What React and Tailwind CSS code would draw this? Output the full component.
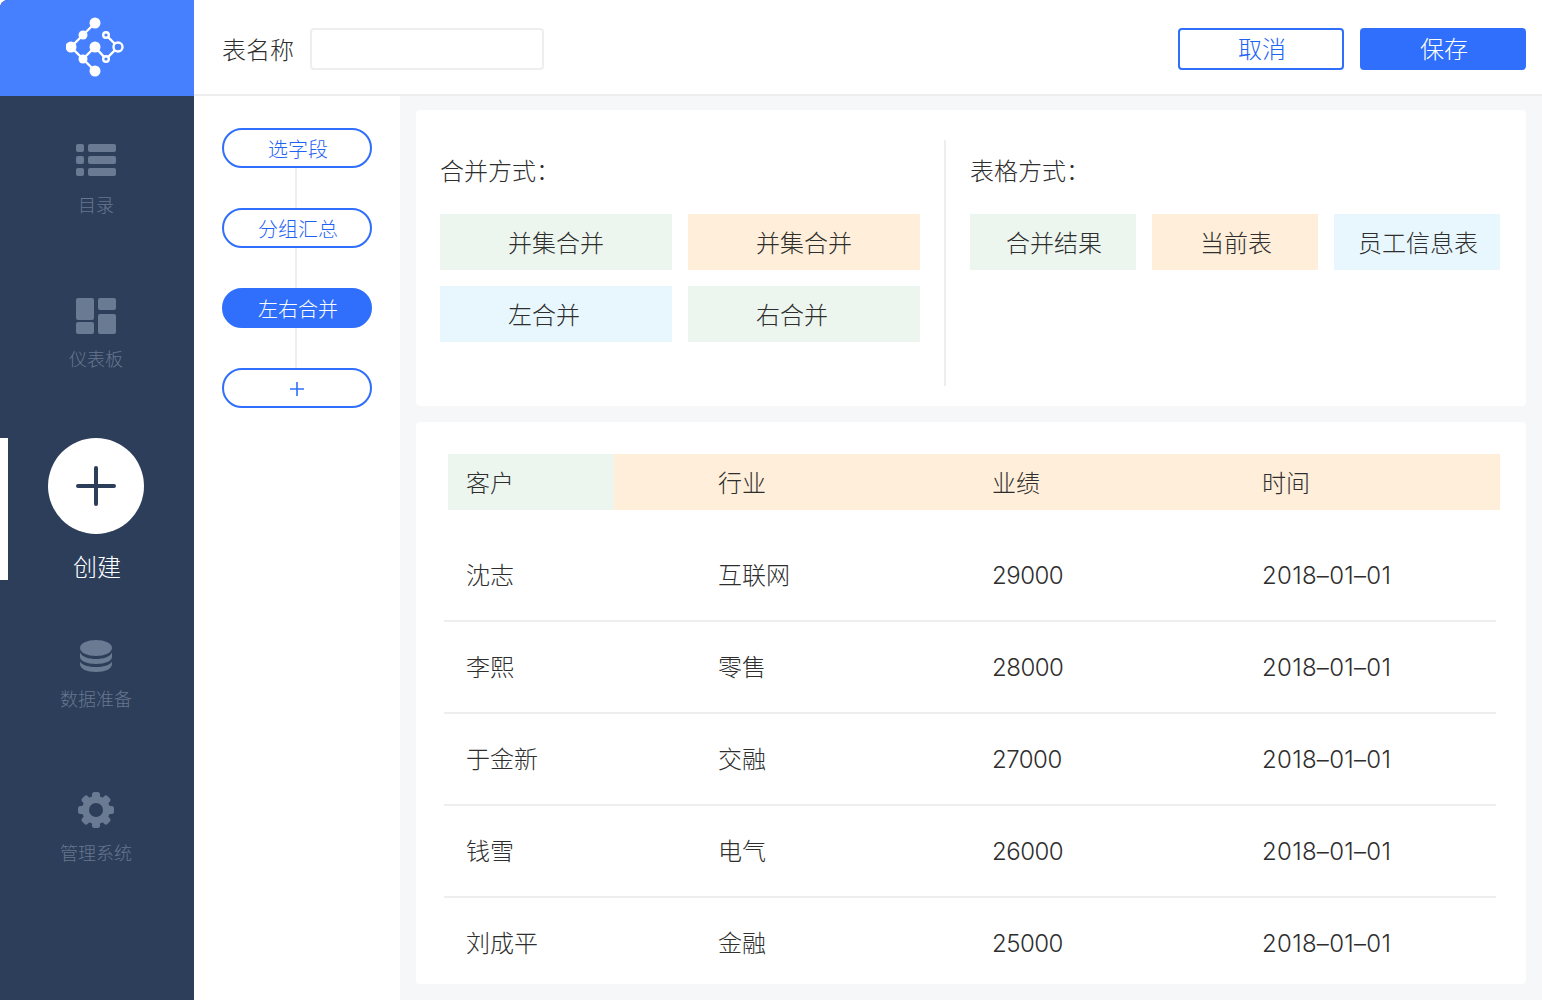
const fontStack = { fontFamily: '"Noto Sans CJK SC", "Noto Sans", sans-serif' };
const numStack = { fontFamily: 'Inter, "Noto Sans", sans-serif' };

const rows = [
  ['沈志', '互联网', '29000'],
  ['李熙', '零售', '28000'],
  ['于金新', '交融', '27000'],
  ['钱雪', '电气', '26000'],
  ['刘成平', '金融', '25000'],
];

function Logo() {
  return (
    <svg width="60" height="60" viewBox="66 17 60 60" fill="none">
      <g stroke="#fff" strokeWidth="2.4">
        <path d="M95 23L71 47L95 71" />
        <path d="M83 59L95 47L106 59L118 47L106 35" />
      </g>
      <g fill="#fff">
        <circle cx="95" cy="23" r="5.5" />
        <circle cx="83" cy="35" r="4.5" />
        <circle cx="71" cy="47" r="5.5" />
        <circle cx="95" cy="47" r="5.5" />
        <circle cx="83" cy="59" r="4.5" />
        <circle cx="95" cy="71" r="5.5" />
      </g>
      <g fill="#4680ff" stroke="#fff" strokeWidth="2.4">
        <circle cx="106" cy="35" r="2.8" />
        <circle cx="118" cy="47" r="4.5" />
        <circle cx="106" cy="59" r="2.8" />
      </g>
    </svg>
  );
}

function ListIcon() {
  return (
    <svg width="40" height="32" viewBox="0 0 40 32" fill="#6b7a93">
      <rect x="0" y="0" width="8" height="8" rx="2" />
      <rect x="12" y="0" width="28" height="8" rx="2" />
      <rect x="0" y="12" width="8" height="8" rx="2" />
      <rect x="12" y="12" width="28" height="8" rx="2" />
      <rect x="0" y="24" width="8" height="8" rx="2" />
      <rect x="12" y="24" width="28" height="8" rx="2" />
    </svg>
  );
}

function DashIcon() {
  return (
    <svg width="40" height="36" viewBox="0 0 40 36" fill="#6b7a93">
      <rect x="0" y="0" width="18" height="22" rx="2" />
      <rect x="22" y="0" width="18" height="12" rx="2" />
      <rect x="0" y="24" width="18" height="12" rx="2" />
      <rect x="22" y="16" width="18" height="20" rx="2" />
    </svg>
  );
}

function DbIcon() {
  return (
    <svg width="32" height="32" viewBox="0 0 32 32" fill="#6b7a93">
      <ellipse cx="16" cy="8" rx="16" ry="8" />
      <path d="M0 12.5C2 17 9 19 16 19S30 17 32 12.5V17C32 21 25 24 16 24S0 21 0 17Z" />
      <path d="M0 21.5C2 25.5 9 27 16 27S30 25.500 32 21.500V24C32 29 25 32 16 32S0 29 0 24Z" />
    </svg>
  );
}

function GearIcon() {
  return (
    <svg width="36" height="36" viewBox="0 0 36 36">
      <g fill="#6b7a93">
        <circle cx="18" cy="18" r="14" />
        {[0, 45, 90, 135, 180, 225, 270, 315].map((a) => (
          <rect key={a} x="14" y="0" width="8" height="8" rx="2.5" transform={`rotate(${a} 18 18)`} />
        ))}
      </g>
      <circle cx="18" cy="18" r="7" fill="#2c3e5a" />
    </svg>
  );
}

function NavItem({ icon, label, className }) {
  return (
    <div className={`flex flex-col items-center pr-0.5 ${className}`}>
      {icon}
      <span className="text-[18px] leading-[26px] text-[#67768f]">{label}</span>
    </div>
  );
}

function Pill({ children, active }) {
  return (
    <div
      className={`flex h-10 w-[150px] items-center justify-center rounded-full border-2 border-[#2f6ffb] pl-0.5 pt-0.5 text-[20px] leading-none ${
        active ? 'bg-[#2f6ffb] text-white' : 'bg-white text-[#1f63f5]'
      }`}
    >
      {children}
    </div>
  );
}

function Connector() {
  return <div className="ml-[73px] h-10 w-0.5 bg-[#eeeeee]" />;
}

function Chip({ color, className, children }) {
  return <div className={`flex h-14 items-center text-[24px] ${color} ${className}`}>{children}</div>;
}

export default function App() {
  return (
    <div style={fontStack} className="flex h-[1000px] w-[1542px] overflow-hidden rounded-t-lg bg-white font-light text-[#2e2e2e]">
      {/* sidebar */}
      <aside className="flex w-[194px] shrink-0 flex-col bg-[#2c3e5a]">
        <div className="flex h-24 items-center justify-center bg-[#4680ff] pb-0.5 pr-0.5">
          <Logo />
        </div>
        <NavItem className="mt-12 gap-[15px]" icon={<ListIcon />} label="目录" />
        <NavItem className="mt-[81px] gap-[11px]" icon={<DashIcon />} label="仪表板" />
        <div className="relative mt-[67px] flex h-[142px] flex-col items-center pr-0.5">
          <div className="absolute left-0 top-0 h-full w-2 bg-white" />
          <div className="flex size-24 shrink-0 items-center justify-center rounded-full bg-white">
            <svg width="40" height="40" viewBox="0 0 40 40" stroke="#2c3e5a" strokeWidth="4" strokeLinecap="round">
              <path d="M20 2V38M2 20H38" />
            </svg>
          </div>
          <span className="mt-[14px] pl-0.5 text-[24px] leading-9 text-white">创建</span>
        </div>
        <NavItem className="mt-[60px] gap-[13px]" icon={<DbIcon />} label="数据准备" />
        <NavItem className="mt-[81px] gap-[11px]" icon={<GearIcon />} label="管理系统" />
      </aside>

      <div className="flex min-w-0 flex-1 flex-col">
        {/* top bar */}
        <header className="flex h-24 shrink-0 items-center border-b-2 border-[#eeeeee] pl-7 pr-4 pt-1">
          <span className="text-[24px]">表名称</span>
          <div className="ml-4 h-[42px] w-[234px] rounded border-2 border-[#eeeeee]" />
          <button className="ml-auto flex h-[42px] w-[166px] items-center justify-center rounded border-2 border-[#2f6ffb] pb-0.5 pl-0.5 text-[24px] text-[#1f63f5]">
            取消
          </button>
          <button className="ml-4 flex h-[42px] w-[166px] items-center justify-center rounded bg-[#2f6ffb] pb-0.5 pl-0.5 text-[24px] text-white">
            保存
          </button>
        </header>

        <div className="flex min-h-0 flex-1">
          {/* flow steps */}
          <div className="w-[206px] shrink-0 pl-7 pt-8">
            <Pill>选字段</Pill>
            <Connector />
            <Pill>分组汇总</Pill>
            <Connector />
            <Pill active>左右合并</Pill>
            <Connector />
            <Pill>
              <svg className="-ml-0.5" width="14" height="14" viewBox="0 0 14 14" stroke="#2f6ffb" strokeWidth="1.6">
                <path d="M7 0V14M0 7H14" />
              </svg>
            </Pill>
          </div>

          <main className="flex min-w-0 flex-1 flex-col gap-4 bg-[#f5f7f9] px-4 pt-3.5">
            {/* merge options */}
            <section className="flex h-[296px] shrink-0 rounded bg-white pl-6 pt-[30px]">
              <div className="h-[246px] w-[506px] shrink-0 border-r-2 border-[#eeeeee]">
                <div className="mt-3 text-[24px] leading-9">合并方式：</div>
                <div className="mt-[26px] grid w-[480px] grid-cols-2 gap-4">
                  <Chip color="bg-[#ecf6ee]" className="pl-[68px]">并集合并</Chip>
                  <Chip color="bg-[#ffeed9]" className="pl-[68px]">并集合并</Chip>
                  <Chip color="bg-[#e8f7fd]" className="pl-[68px]">左合并</Chip>
                  <Chip color="bg-[#ecf6ee]" className="pl-[68px]">右合并</Chip>
                </div>
              </div>
              <div className="pl-6">
                <div className="mt-3 text-[24px] leading-9">表格方式：</div>
                <div className="mt-[26px] grid w-[530px] grid-cols-3 gap-4">
                  <Chip color="bg-[#ecf6ee]" className="justify-center pl-0.5">合并结果</Chip>
                  <Chip color="bg-[#ffeed9]" className="justify-center pl-0.5">当前表</Chip>
                  <Chip color="bg-[#e8f7fd]" className="justify-center pl-0.5">员工信息表</Chip>
                </div>
              </div>
            </section>

            {/* preview table */}
            <section className="h-[562px] shrink-0 rounded bg-white pl-7 pr-[26px] pt-8 text-[24px]">
              <div className="ml-1 flex h-14 items-center">
                <div className="flex h-full w-[166px] items-center bg-[#ecf6ee] pl-[18px]">客户</div>
                <div className="grid h-full flex-1 grid-cols-[274px_270px_1fr] items-center bg-[#ffeed9] pl-[104px]">
                  <span>行业</span>
                  <span>业绩</span>
                  <span>时间</span>
                </div>
              </div>
              <div className="mr-1 mt-5">
                {rows.map((r, i) => (
                  <div
                    key={r[0]}
                    className={`grid h-[92px] grid-cols-[274px_274px_270px_1fr] items-center border-b-2 pb-0.5 ${
                      i < rows.length - 1 ? 'border-[#eeeeee]' : 'border-transparent'
                    }`}
                  >
                    <span className="pl-[22px]">{r[0]}</span>
                    <span>{r[1]}</span>
                    <span style={numStack} className="pt-1 tracking-[-0.5px]">{r[2]}</span>
                    <span style={numStack} className="pt-1 tracking-[0.3px]">2018–01–01</span>
                  </div>
                ))}
              </div>
            </section>
          </main>
        </div>
      </div>
    </div>
  );
}
